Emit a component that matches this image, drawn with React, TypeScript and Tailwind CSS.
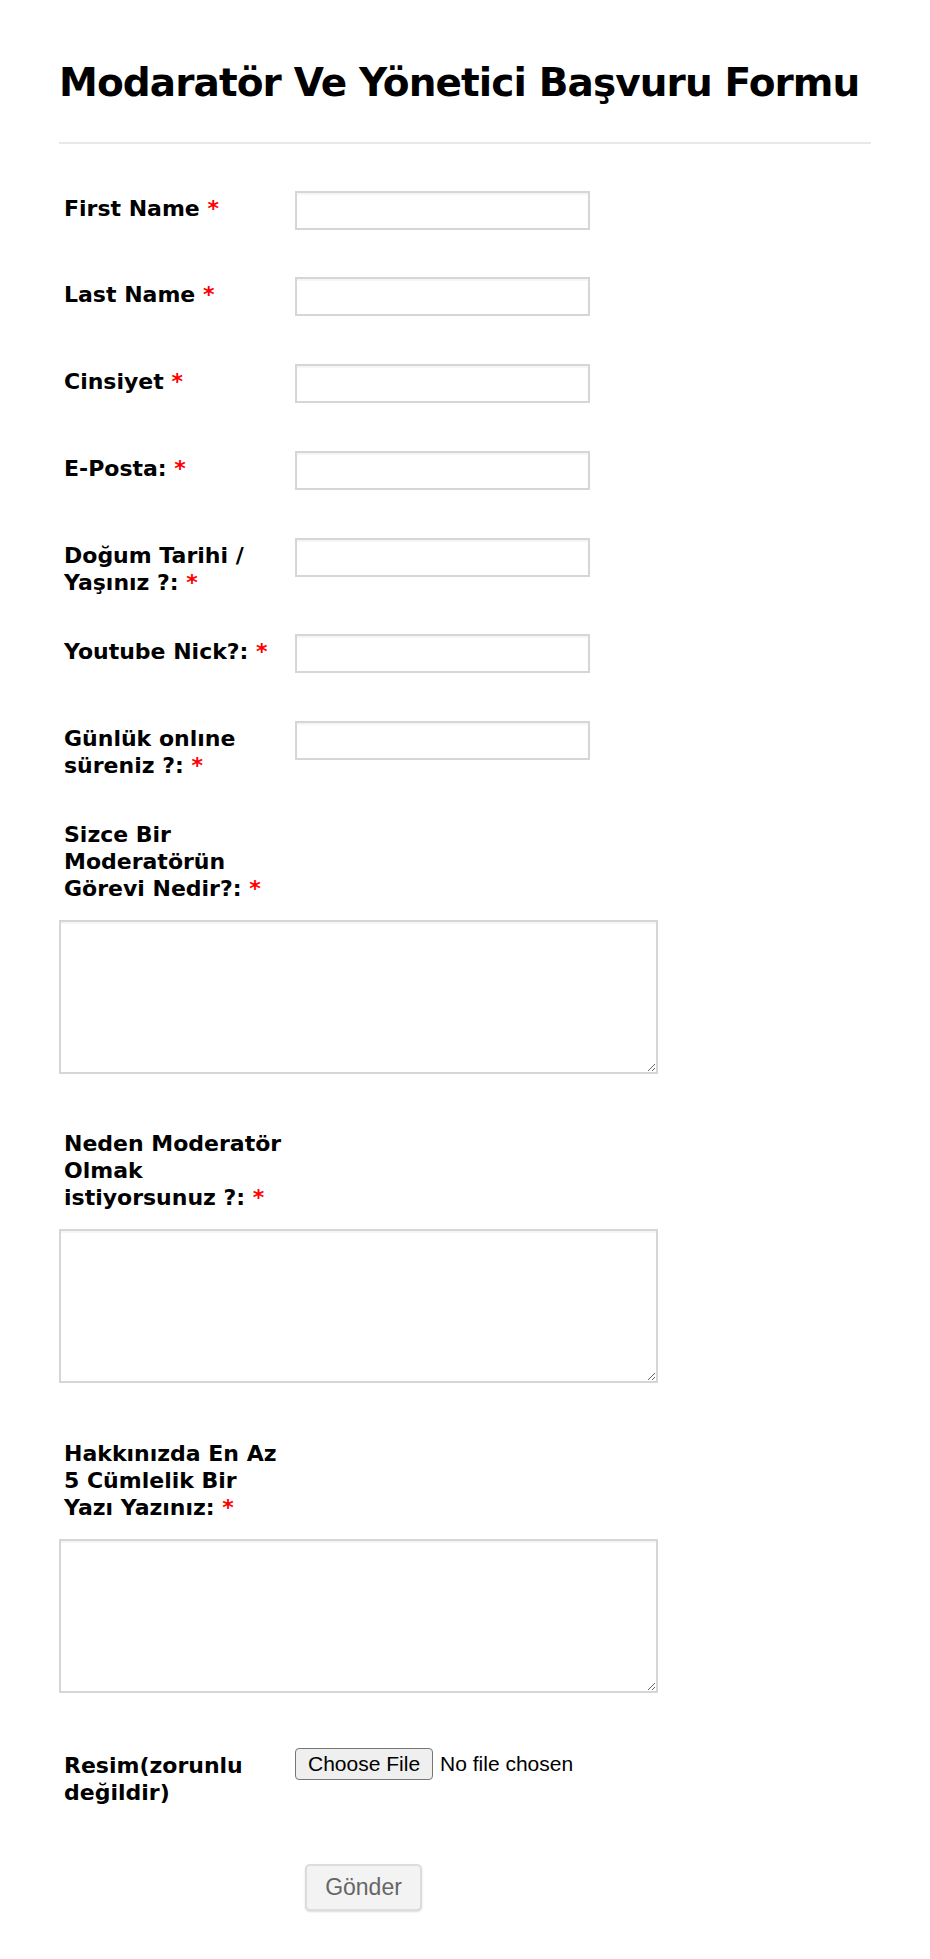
const labelFont = { fontFamily: '"DejaVu Sans", Verdana, sans-serif' };

type Field = {
  label: string;
  kind: "input" | "textarea";
  rowClass: string;
};

const fields: Field[] = [
  { label: "First Name", kind: "input", rowClass: "mb-[47px]" },
  { label: "Last Name", kind: "input", rowClass: "mb-[48px]" },
  { label: "Cinsiyet", kind: "input", rowClass: "mb-[48px]" },
  { label: "E-Posta:", kind: "input", rowClass: "mb-[48px]" },
  { label: "Doğum Tarihi / Yaşınız ?:", kind: "input", rowClass: "mb-[38px]" },
  { label: "Youtube Nick?:", kind: "input", rowClass: "mb-[48px]" },
  { label: "Günlük onlıne süreniz ?:", kind: "input", rowClass: "mb-[38px]" },
  { label: "Sizce Bir Moderatörün Görevi Nedir?:", kind: "textarea", rowClass: "mb-[52px]" },
  { label: "Neden Moderatör Olmak istiyorsunuz ?:", kind: "textarea", rowClass: "mb-[53px]" },
  { label: "Hakkınızda En Az 5 Cümlelik Bir Yazı Yazınız:", kind: "textarea", rowClass: "mb-[55px]" },
];

const Label = ({ text, required = true }: { text: string; required?: boolean }) => (
  <label
    className="block w-[236px] shrink-0 pl-[5px] pr-[7px] pt-[4px] text-[22px] leading-[27px] font-bold text-black"
    style={labelFont}
  >
    <span>{text}</span>
    {required && <span className="text-[#ff0000]"> *</span>}
  </label>
);

const App = () => {
  return (
    <div className="min-h-screen bg-white">
      <form className="w-[812px] ml-[59px] pt-[59px] pb-[40px]" onSubmit={(e) => e.preventDefault()}>
        <h1 className="text-[39px] leading-[48px] tracking-[-0.9px] font-bold text-black whitespace-nowrap" style={labelFont}>
          Modaratör Ve Yönetici Başvuru Formu
        </h1>
        <div className="mt-[35px] h-[2px] bg-[#e8e8e8]" />

        <div className="mt-[47px] flex flex-col">
          {fields.map((f) =>
            f.kind === "input" ? (
              <div key={f.label} className={`flex items-start ${f.rowClass}`}>
                <Label text={f.label} />
                <input
                  type="text"
                  className="w-[295px] h-[39px] border-2 border-[#d6d6d6] bg-white px-2 text-[20px] outline-none shadow-[inset_0_2px_1px_rgba(0,0,0,0.04)]"
                />
              </div>
            ) : (
              <div key={f.label} className={`flex flex-col ${f.rowClass}`}>
                <Label text={f.label} />
                <textarea className="mt-[18px] w-[599px] h-[154px] border-2 border-[#d6d6d6] bg-white p-2 text-[20px] outline-none shadow-[inset_0_2px_1px_rgba(0,0,0,0.04)]" />
              </div>
            )
          )}

          <div className="flex items-start">
            <Label text="Resim(zorunlu değildir)" required={false} />
            <label className="flex items-center cursor-pointer" style={{ fontFamily: '"Liberation Sans", Arial, sans-serif' }}>
              <input type="file" className="hidden" />
              <span className="h-[32px] px-[12px] flex items-center border border-[#767676] rounded-[4px] bg-[#efefef] text-[21px] text-black">
                Choose File
              </span>
              <span className="ml-[7px] text-[21px] text-black">No file chosen</span>
            </label>
          </div>

          <div className="mt-[58px] pl-[246px]">
            <button
              type="submit"
              className="w-[117px] h-[47px] rounded-[5px] border-2 border-[#dcdcdc] bg-[#f3f3f3] text-[23px] text-[#666] shadow-[0_1px_2px_rgba(0,0,0,0.15)]"
              style={{ fontFamily: '"Liberation Sans", Arial, sans-serif' }}
            >
              Gönder
            </button>
          </div>
        </div>
      </form>
    </div>
  );
};

export default App;
